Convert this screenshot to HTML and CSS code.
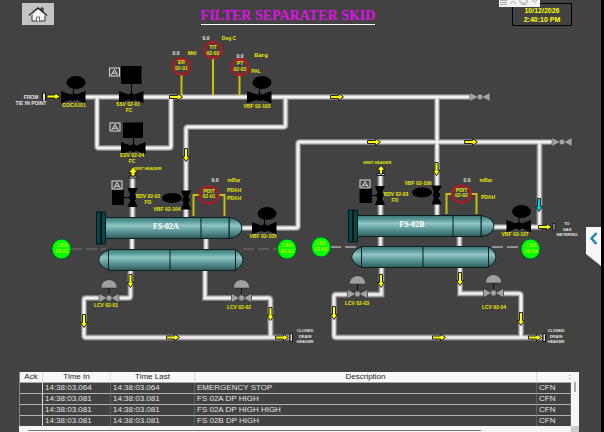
FILE: index.html
```
<!DOCTYPE html>
<html lang="en">
<head>
<meta charset="utf-8">
<title>Filter Separater Skid</title>
<link rel="stylesheet" href="styles.css">
</head>
<body>
<main class="screen">
  <header class="topbar">
    <button class="home" aria-label="Home">
      <svg viewBox="0 0 20 16" width="20" height="16" aria-hidden="true">
        <path d="M13 2h2v4h-2z" fill="#777" stroke="#222"/>
        <path d="M4 8.500L10 3l7 5.500V15H4z" fill="#f4f4f4" stroke="#333"/>
        <path d="M1 9.500L10 2l9 7.500" fill="none" stroke="#222" stroke-width="1.400"/>
        <path d="M2.500 9.500L10 3.500l7.500 6" fill="none" stroke="#fff" stroke-width=".8"/>
        <path d="M8.500 15v-4h3v4" fill="#fff" stroke="#444" stroke-width=".8"/>
      </svg>
    </button>
    <h1 class="title">FILTER SEPARATER SKID</h1>
    <div class="clock"><span>10/12/2026</span><span>2:40:10 PM</span></div>
    <div class="floatbar">
      <svg viewBox="0 0 41 7" width="41" height="7" aria-hidden="true" fill="none" stroke="#aaa">
        <path d="M1 .5h7M1 2.500h7M1 4.500h7M11 4q3-5 6 0M21 0v3h7V0M23 4.500h4M33 0l2.500 2L38 0"/>
      </svg>
    </div>
  </header>

  <section class="process">
    <svg class="diagram" viewBox="0 30 601 342" role="img" aria-label="Process diagram">
      <defs>
        <linearGradient id="shell" x1="0" y1="0" x2="0" y2="1">
          <stop offset="0" stop-color="#3a7272"/><stop offset=".2" stop-color="#5c9c9c"/>
          <stop offset=".38" stop-color="#92c6c5"/><stop offset=".6" stop-color="#63a0a0"/>
          <stop offset="1" stop-color="#2c5c5d"/>
        </linearGradient>
        <path id="arrow" d="M-6.500-1.500H1.500V-3.500L6.500 0L1.500 3.500V1.500H-6.500z"/>
        <path id="bowtie" d="M-12.500-6L-3-2.500Q0-5 3-2.500L12-6V6L3 3Q0 5 -3 3L-12.500 6z"/>
        <g id="ballvalve"><use href="#bowtie"/><path d="M0-3V-9" stroke="#000"/><ellipse cx="2.500" cy="-14.500" rx="9.500" ry="6.500"/></g>
        <g id="boxvalve"><use href="#bowtie"/><path d="M0-3V-14" stroke="#000"/></g>
        <path id="upright" d="M-5-9.500H5L2.500-3Q5 0 2.500 3L5 9.500H-5L-2.500 3Q-5 0 -2.500-3z"/>
        <g id="greyvalve"><path d="M-10-4H10V4H-10z" fill="#424242"/><g fill="#a2a2a2" stroke="#222" stroke-width=".5"><path d="M-10-4.500L-1.500 0L-10 4.500zM10-4.500L1.500 0L10 4.500z"/><circle r="3"/></g></g>
        <g id="control"><path d="M0-10V-2" stroke="#111"/><path d="M-8-10C-8-21 8-21 8-10z" fill="#a0a0a0" stroke="#222" stroke-width=".5"/><use href="#greyvalve"/></g>
        <g id="tag"><rect x="-5" y="-4" width="10" height="8" fill="#444" stroke="#ddd"/><path d="M-3.200 3L0-2.500L3.200 3M-2 1.200H2" fill="none" stroke="#eee" stroke-width=".9"/></g>
        <g id="pipes">
          <path d="M82 97H472M97 97V146Q97 148 99 148H169Q171 148 171 146V97"/>
          <path d="M285.500 97V125Q285.500 127 283 127H188Q186 127 186 129V217M437 97V216"/>
          <path d="M241 228H296Q298 228 298 226V144Q298 142 300 142H553M539.500 142V227M493 227H541"/>
          <path d="M132.500 176V217M132 239V249M206 239V249M380.500 174V215M380.500 236V247M459.500 236V247"/>
          <path d="M130.500 271V296Q130.500 298 128 298H86Q84 298 84 300V335Q84 337.500 86 337.500H289"/>
          <path d="M205 271V298H268Q270.500 298 270.500 300V337"/>
          <path d="M381.500 268V294.500H336Q334 294.500 334 297V335Q334 337.500 336 337.500H542"/>
          <path d="M460 268V293.500H519Q521 293.500 521 296V337"/>
        </g>
        <g id="separator">
          <path d="M133 .5Q145 2 146 11Q145 20 133 21.500z" fill="url(#shell)" stroke="#0b1f20"/>
          <path d="M9 .5H133V21.500H9z" fill="url(#shell)" stroke="#0b1f20"/>
          <path d="M105 .5V21.500" stroke="#0b1f20"/>
          <path d="M.5-5H4.500V27H.5zM5.500-5H9.500V27H5.500z" fill="#04474a" stroke="#001414"/>
        </g>
        <g id="boot">
          <path d="M11 .5H137Q144 4 145 11Q144 18 137 21.500H11Q2 18 .5 11Q2 4 11 .5z" fill="url(#shell)" stroke="#0b1f20"/>
          <path d="M10.500 1V21M72 1V21M137.500 1V21" stroke="#0b1f20"/>
        </g>
      </defs>

      <use href="#pipes" class="pipe pipe-edge"/>
      <use href="#pipes" class="pipe pipe-mid"/>
      <use href="#pipes" class="pipe pipe-core"/>

      <g class="flange">
        <path d="M42.500 93h3v8h-3zM290 333.500h2.500v8H290zM543 333.500h2.500v8H543zM553 223.500h2v7h-2zM129 176h8v2h-8zM377 173.500h8v2h-8z"/>
      </g>

      <g class="leads">
        <path d="M181.500 75V95M213 58V95M239.500 75V95M193.500 216V195H200M218 195H224.500V216M446.500 214V194H452M470 194H476.500V214"/>
      </g>
      <path class="dash" d="M71 249H106M243 249H278"/>
      <path class="dash dash-live" d="M330 247H356M492 247H522"/>

      <use href="#separator" x="96" y="217"/>
      <use href="#boot" x="98" y="249"/>
      <use href="#separator" x="348" y="215"/>
      <use href="#boot" x="351" y="246"/>

      <g class="black">
        <use href="#ballvalve" x="73.500" y="97"/>
        <use href="#boxvalve" x="131.500" y="97"/><path d="M121 66h20.500v18H121z"/>
        <use href="#boxvalve" x="133.500" y="148"/><path d="M123 122.500h20v15.500h-20z"/>
        <use href="#ballvalve" x="259.500" y="97"/>
        <use href="#ballvalve" x="264.500" y="228"/>
        <use href="#ballvalve" x="519" y="226"/>
        <use href="#upright" x="132.500" y="197.500"/><path d="M112 190h12v15h-12zM124 197h6v1h-6z"/>
        <use href="#upright" x="186" y="200"/><ellipse cx="172" cy="198" rx="10" ry="5"/>
        <use href="#upright" x="380" y="195.500"/><path d="M359.500 188h12.500v15h-12.500zM372 195h6v1h-6z"/>
        <use href="#upright" x="436.500" y="195"/><ellipse cx="422" cy="192.500" rx="10" ry="5"/>
      </g>
      <use href="#greyvalve" x="480" y="97"/><use href="#greyvalve" x="562" y="142"/>
      <use href="#control" x="109" y="298"/><use href="#control" x="241.500" y="298"/>
      <use href="#control" x="357.500" y="294"/><use href="#control" x="493.500" y="293"/>
      <use href="#tag" x="114.500" y="72"/><use href="#tag" x="115" y="127"/>
      <use href="#tag" x="117" y="185"/><use href="#tag" x="365" y="184"/>

      <g class="arrows">
        <use href="#arrow" x="53.500" y="96.500"/><use href="#arrow" x="176" y="97"/><use href="#arrow" x="337" y="97"/>
        <use href="#arrow" x="374" y="142"/><use href="#arrow" x="471" y="142"/><use href="#arrow" x="545" y="227"/>
        <use href="#arrow" x="173" y="337.500"/><use href="#arrow" x="282" y="337.500"/>
        <use href="#arrow" x="439" y="337.500"/><use href="#arrow" x="535" y="337.500"/>
        <use href="#arrow" transform="translate(186 155) rotate(90)"/>
        <use href="#arrow" transform="translate(436.500 169) rotate(90)"/>
        <use href="#arrow" transform="translate(130.500 281) rotate(90)"/>
        <use href="#arrow" transform="translate(84 321) rotate(90)"/>
        <use href="#arrow" transform="translate(270.500 314) rotate(90)"/>
        <use href="#arrow" transform="translate(381 281) rotate(90)"/>
        <use href="#arrow" transform="translate(460 279) rotate(90)"/>
        <use href="#arrow" transform="translate(334 313) rotate(90)"/>
        <use href="#arrow" transform="translate(521 319) rotate(90)"/>
        <path d="M133 167l4.500 5.500H135V176h-4v-3.500h-2.500zM381 165.500l4 4.500h-2.500v4h-3v-4H377z"/>
        <use class="cyan" href="#arrow" transform="translate(539 205) rotate(90)"/>
      </g>

      <g class="rings">
        <ellipse cx="181.500" cy="66.500" rx="8.500" ry="8"/><ellipse cx="213" cy="50" rx="8.500" ry="8"/>
        <ellipse cx="240" cy="67" rx="8.500" ry="8"/><ellipse cx="209" cy="195" rx="9.500" ry="8.500"/>
        <ellipse cx="461.500" cy="194" rx="9.500" ry="8.500"/>
      </g>
      <g class="lamps">
        <ellipse cx="61.500" cy="249" rx="9.500" ry="10"/><ellipse cx="287" cy="249" rx="9.500" ry="10"/>
        <ellipse cx="321" cy="247" rx="9.500" ry="10"/><ellipse cx="530.500" cy="249" rx="9.500" ry="10"/>
      </g>

      <g class="label">
        <text x="74" y="107">GOCA101</text>
        <text x="128" y="106">SSV 02-01</text><text x="129" y="112">FC</text>
        <text x="132" y="157">ESV 02-04</text><text x="132" y="163">FC</text>
        <text x="257" y="108">VBF 02-103</text><text x="256" y="73">PAL</text>
        <text x="147" y="170" class="tiny">VENT HEADER</text><text x="377" y="164" class="tiny">VENT HEADER</text>
        <text x="148" y="198">BDV 02-02</text><text x="148" y="204">FO</text>
        <text x="167" y="211">VBF 02-104</text>
        <text x="396" y="196">BDV 02-03</text><text x="395" y="202">FO</text>
        <text x="418" y="185">VBF 02-106</text>
        <text x="263" y="238">VBF 02-105</text><text x="515" y="236">VBF 02-107</text>
        <text x="106" y="307">LCV 02-01</text><text x="239" y="309">LCV 02-02</text>
        <text x="357" y="305">LCV 02-03</text><text x="494" y="309">LCV 02-04</text>
        <text x="234" y="182">mBar</text><text x="234" y="192">PDAH</text><text x="234" y="200">PDAH</text>
        <text x="486" y="182">mBar</text><text x="488" y="199">PDAH</text>
        <text x="181.500" y="64">ER</text><text x="181.500" y="70">02-01</text>
        <text x="213" y="49">TIT</text><text x="213" y="55">02-02</text>
        <text x="240" y="65">PT</text><text x="240" y="71">02-03</text>
        <text x="209" y="193">PDIT</text><text x="209" y="198">02-01</text>
        <text x="461.500" y="192">PDIT</text><text x="461.500" y="197">02-02</text>
      </g>
      <g class="label unit">
        <text x="192" y="55">Mtl</text><text x="229" y="40" class="narrow">Deg C</text><text x="261" y="57">Barg</text>
      </g>
      <g class="label lamp-text">
        <text x="62" y="247">LSH</text><text x="62" y="253">02-01</text>
        <text x="287" y="247">LSH</text><text x="287" y="253">02-02</text>
        <text x="321" y="245">LSH</text><text x="321" y="251">02-03</text>
        <text x="531" y="247">LSH</text><text x="531" y="253">02-04</text>
      </g>
      <g class="label white">
        <text x="31" y="99">FROM</text><text x="31" y="105">TIE IN POINT</text>
        <text x="176" y="55">0.0</text><text x="206" y="40">0.0</text><text x="240" y="58">0.0</text>
        <text x="215" y="182">0.0</text><text x="467" y="182">0.0</text>
      </g>
      <g class="label white tiny">
        <text x="567" y="225">TO</text><text x="567" y="231">GAS</text><text x="567" y="236">METERING</text>
        <text x="305" y="332">CLOSED</text><text x="305" y="338">DRAIN</text><text x="305" y="343">HEADER</text>
        <text x="556" y="332">CLOSED</text><text x="556" y="338">DRAIN</text><text x="556" y="343">HEADER</text>
      </g>
      <g class="vessel-name"><text x="166" y="229">FS-02A</text><text x="412" y="227">FS-02B</text></g>
    </svg>
    <button class="drawer" aria-label="Open side panel">
      <svg viewBox="0 0 15 39" width="15" height="39" aria-hidden="true">
        <path d="M0 0H15V39L0 27z" fill="#f6f6f6"/>
        <path d="M10.500 6L5.500 11.500L10.500 17" fill="none" stroke="#2384b4" stroke-width="2.500"/>
      </svg>
    </button>
  </section>

  <section class="alarms">
    <div class="rows">
      <table>
        <colgroup><col class="c-ack"><col class="c-in"><col class="c-last"><col><col class="c-state"></colgroup>
        <thead><tr><th>Ack</th><th>Time In</th><th>Time Last</th><th>Description</th><th class="more">:</th></tr></thead>
        <tbody>
          <tr><td></td><td>14:38:03.064</td><td>14:38:03.064</td><td>EMERGENCY STOP</td><td>CFN</td></tr>
          <tr><td></td><td>14:38:03.081</td><td>14:38:03.081</td><td>FS 02A DP HIGH</td><td>CFN</td></tr>
          <tr><td></td><td>14:38:03.081</td><td>14:38:03.081</td><td>FS 02A DP HIGH HIGH</td><td>CFN</td></tr>
          <tr><td></td><td>14:38:03.081</td><td>14:38:03.081</td><td>FS 02B DP HIGH</td><td>CFN</td></tr>
        </tbody>
      </table>
    </div>
    <div class="vscroll"><i></i></div>
    <div class="hscroll"><i></i></div>
    <div class="corner"></div>
  </section>
</main>
</body>
</html>
```
FILE: styles.css
```
* { box-sizing: border-box; }
body {
  margin: 0;
  background: #424242;
  font-family: "Liberation Sans", Arial, sans-serif;
}
.screen {
  display: flex;
  flex-direction: column;
  height: 100vh;
  overflow: hidden;
  border-right: 3px solid #000;
}
.topbar {
  position: relative;
  flex: none;
  display: grid;
  grid-template-columns: 60px 1fr 60px;
  align-items: start;
  height: 30px;
  padding: 3px 29px 0 22px;
}
.home {
  width: 32px;
  height: 22px;
  padding: 0;
  display: grid;
  place-items: center;
  border: 0;
  background: #c4c4c4;
}
.title {
  justify-self: center;
  margin: 5px 18px 0 0;
  border-bottom: 1px solid #fff;
  font: bold 14px/16px "Liberation Serif", "Times New Roman", serif;
  color: #e010e8;
  white-space: nowrap;
}
.clock {
  display: flex;
  flex-direction: column;
  align-items: center;
  height: 23px;
  padding-top: 2px;
  border: 1px solid #000;
  color: #ff0;
  font-size: 7px;
  font-weight: bold;
  line-height: 9px;
}
.floatbar {
  position: absolute;
  top: 0;
  right: 61px;
  height: 7px;
  background: #f2f2f2;
}
.floatbar svg { display: block; }

.process { position: relative; flex: none; }
.diagram { display: block; width: 100%; height: auto; }
.drawer {
  position: absolute;
  right: 0;
  top: 197px;
  padding: 0;
  border: 0;
  background: none;
}
.drawer svg { display: block; }

.pipe { fill: none; }
.pipe-edge { stroke: #808080; stroke-width: 6px; }
.pipe-mid { stroke: #c4c4c4; stroke-width: 4px; }
.pipe-core { stroke: #f2f2f2; stroke-width: 2px; }
.flange { fill: #ddd; stroke: #111; stroke-width: 1px; }
.leads { fill: none; stroke: #c8c010; stroke-width: 2px; }
.dash { stroke: #777; stroke-width: 1px; stroke-dasharray: 11 4; }
.dash-live { stroke: #ddd; }
.arrows { fill: #ff0; stroke: #222; stroke-width: 1px; }
.cyan { fill: #00d8e0; }
.rings { fill: none; stroke: #c01420; stroke-width: 2px; }
.lamps { fill: #0f0; stroke: #063; stroke-width: 1px; }
.black { fill: #000; }
.label {
  fill: #e8e800;
  font-size: 5px;
  font-weight: bold;
  text-anchor: middle;
}
.unit { font-size: 6px; }
.narrow { font-size: 5px; }
.tiny { font-size: 4px; }
.white { fill: #e4e4e4; }
.lamp-text { fill: #c8e800; }
.vessel-name {
  fill: #fff;
  font: bold 8px "Liberation Serif", "Times New Roman", serif;
  text-anchor: middle;
}

.alarms {
  flex: 1;
  min-height: 0;
  display: grid;
  grid-template: minmax(0, 1fr) 6px / minmax(0, 1fr) 8px;
  margin: 0 22px 0 19px;
}
.rows { overflow: hidden; border-left: 1px solid #888; }
table {
  width: 100%;
  table-layout: fixed;
  border-collapse: separate;
  border-spacing: 0;
  font-size: 8px;
  line-height: 10px;
}
th, td { height: 11px; padding: 0 2px; white-space: nowrap; overflow: hidden; }
th {
  background: #f8f8f8;
  color: #222;
  font-weight: normal;
  border-right: 1px solid #ddd;
  border-bottom: 1px solid #aaa;
}
td {
  color: #e2e2e2;
  border-right: 1px solid #606060;
  border-bottom: 1px solid #b4b4b4;
}
td:first-child { border-right-color: #ddd; }
.c-ack { width: 23px; }
.c-in { width: 68px; }
.c-last { width: 84px; }
.c-state { width: 34px; }
th:first-child { padding: 0; }
.more { text-align: right; padding: 0; border-right: 0; }
.vscroll { background: #f6f6f6; padding: 10px 3px 0; }
.vscroll i { display: block; height: 10px; width: 2px; background: #aaa; }
.hscroll { background: #f6f6f6; padding: 4px 90px 0 9px; }
.hscroll i { display: block; height: 1px; background: #777; }
.corner { background: #ccc; }
```
